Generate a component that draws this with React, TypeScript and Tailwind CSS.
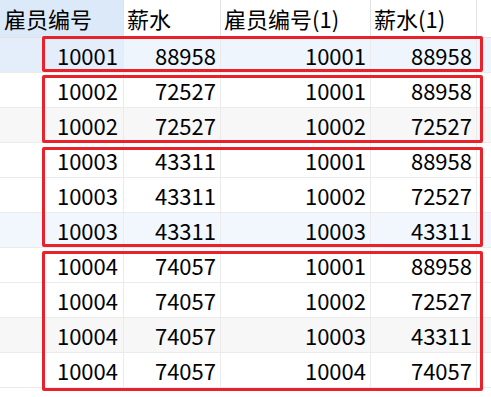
import React from 'react';

const rows: [string, string, string, string][] = [
  ['10001', '88958', '10001', '88958'],
  ['10002', '72527', '10001', '88958'],
  ['10002', '72527', '10002', '72527'],
  ['10003', '43311', '10001', '88958'],
  ['10003', '43311', '10002', '72527'],
  ['10003', '43311', '10003', '43311'],
  ['10004', '74057', '10001', '88958'],
  ['10004', '74057', '10002', '72527'],
  ['10004', '74057', '10003', '43311'],
  ['10004', '74057', '10004', '74057'],
];

// background per row
const rowBg = [
  'bg-[#eef5fc]',
  'bg-white',
  'bg-[#f7f7f7]',
  'bg-white',
  'bg-white',
  'bg-[#f2f7fd]',
  'bg-white',
  'bg-white',
  'bg-[#f7f7f7]',
  'bg-white',
];

// red group outlines: [top, height]
const groups: [number, number][] = [
  [36, 36],
  [75, 68],
  [147, 100],
  [251, 140],
];

const cols = ['w-[124px] pr-[5px]', 'w-[97px] pr-[4px]', 'w-[150px] pr-[4px]', 'w-[106px] pr-[4px]'];
const heads = ['w-[124px]', 'w-[97px]', 'w-[150px]', 'w-[106px]'];

export default function App() {
  return (
    <div
      className="relative w-[491px] h-[397px] overflow-hidden bg-white text-[22px] text-black"
      style={{ fontFamily: '"Noto Sans CJK SC", "Microsoft YaHei", sans-serif' }}
    >
      {/* Header */}
      <div className="flex h-[38px] border-b border-[#e2e2e2]">
        <div className={`${heads[0]} bg-[#dbe9f8] border-r border-[#e2e2e2] pl-[4px] leading-[37px]`}>雇员编号</div>
        <div className={`${heads[1]} border-r border-[#e2e2e2] pl-[3px] leading-[37px]`}>薪水</div>
        <div className={`${heads[2]} border-r border-[#e2e2e2] pl-[3px] leading-[37px]`}>雇员编号(1)</div>
        <div className={`${heads[3]} border-r border-[#e2e2e2] pl-[3px] leading-[37px]`}>薪水(1)</div>
      </div>

      {/* Rows */}
      {rows.map((r, i) => (
        <div key={i} className={`flex h-[35px] border-b border-[#ebebeb] ${rowBg[i]}`}>
          {r.map((v, j) => (
            <div
              key={j}
              className={`${cols[j]} ${i === 0 && j === 0 ? 'bg-[#e4eefa]' : ''} border-r border-[#ebebeb] text-right leading-[34px]`}
            >
              {v}
            </div>
          ))}
        </div>
      ))}

      {/* Group outlines */}
      {groups.map(([top, h], i) => (
        <div
          key={i}
          className="absolute left-[42px] w-[441px] border-[3px] border-[#e8212b] rounded-[2px] pointer-events-none"
          style={{ top, height: h }}
        />
      ))}
    </div>
  );
}
